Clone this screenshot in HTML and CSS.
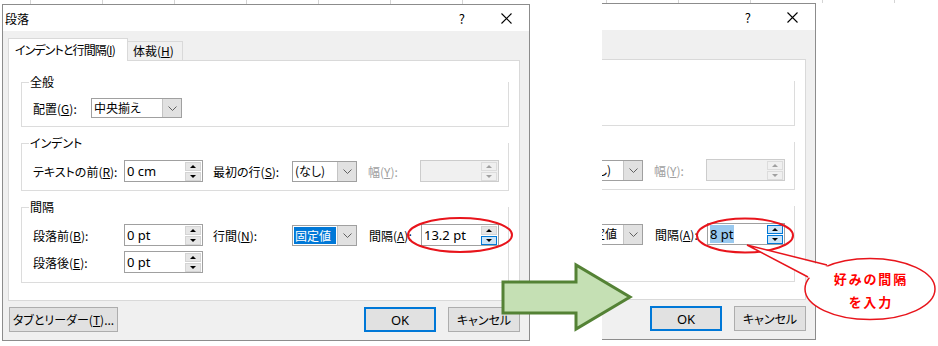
FILE: index.html
```html
<!DOCTYPE html>
<html lang="ja">
<head>
  <meta charset="UTF-8">
  <meta name="viewport" content="width=device-width, initial-scale=1.0">
  <title>段落</title>
  <link rel="stylesheet" href="styles.css">
</head>
<body>
  <div class="page">

    <!-- before: line spacing 13.2 pt -->
    <div class="shot shot-left">
      <div class="sheet-top"></div>
      <div class="dialog">
        <div class="titlebar">
          <span class="title">段落</span>
          <span class="help">?</span>
          <svg class="close" width="11" height="11" viewBox="0 0 11 11"><path d="M0.5 0.5L10.5 10.5M10.5 0.5L0.5 10.5" stroke="#000" stroke-width="1.1"/></svg>
        </div>
        <div class="dlg-body">
          <div class="tabs">
            <div class="tab active">インデントと行間隔(<u>I</u>)</div>
            <div class="tab">体裁(<u>H</u>)</div>
            <div class="tab-rest"></div>
          </div>
          <div class="panel">
            <div class="group">
              <div class="group-head"><span class="stub"></span><span class="legend">全般</span><span class="fill"></span></div>
              <div class="group-body g-general">
                <div class="row">
                  <span class="lbl w58">配置(<u>G</u>):</span>
                  <div class="combo wide"><span class="val">中央揃え</span><span class="drop"><svg width="9" height="5" viewBox="0 0 9 5"><path d="M0.5 0.5L4.5 4.5L8.5 0.5" fill="none" stroke="#606060"/></svg></span></div>
                </div>
              </div>
            </div>

            <div class="group">
              <div class="group-head"><span class="stub"></span><span class="legend">インデント</span><span class="fill"></span></div>
              <div class="group-body g-indent">
                <div class="row">
                  <span class="lbl w91">テキストの前(<u>R</u>):</span>
                  <div class="spin"><span class="val">0 cm</span><span class="arrows"><i class="arr up"></i><i class="arr down"></i></span></div>
                  <span class="lbl w79 gap10">最初の行(<u>S</u>):</span>
                  <div class="combo"><span class="val">(なし)</span><span class="drop"><svg width="9" height="5" viewBox="0 0 9 5"><path d="M0.5 0.5L4.5 4.5L8.5 0.5" fill="none" stroke="#606060"/></svg></span></div>
                  <span class="lbl w52 gap11 dim">幅(<u>Y</u>):</span>
                  <div class="spin off"><span class="val"></span><span class="arrows"><i class="arr up"></i><i class="arr down"></i></span></div>
                </div>
              </div>
            </div>

            <div class="group">
              <div class="group-head"><span class="stub"></span><span class="legend">間隔</span><span class="fill"></span></div>
              <div class="group-body g-spacing">
                <div class="row">
                  <span class="lbl w91">段落前(<u>B</u>):</span>
                  <div class="spin"><span class="val">0 pt</span><span class="arrows"><i class="arr up"></i><i class="arr down"></i></span></div>
                  <span class="lbl w79 gap10">行間(<u>N</u>):</span>
                  <div class="combo"><span class="val sel">固定値</span><span class="drop"><svg width="9" height="5" viewBox="0 0 9 5"><path d="M0.5 0.5L4.5 4.5L8.5 0.5" fill="none" stroke="#606060"/></svg></span></div>
                  <span class="lbl w52 gap12">間隔(<u>A</u>):</span>
                  <div class="spin narrow"><span class="val">13.2 pt</span><span class="arrows"><i class="arr up"></i><i class="arr down hot"></i></span></div>
                </div>
                <div class="row">
                  <span class="lbl w91">段落後(<u>E</u>):</span>
                  <div class="spin"><span class="val">0 pt</span><span class="arrows"><i class="arr up"></i><i class="arr down"></i></span></div>
                </div>
              </div>
            </div>
          </div>

          <div class="btn-row">
            <div class="btn btn-tabs">タブとリーダー(<u>T</u>)...</div>
            <div class="btn btn-ok">OK</div>
            <div class="btn btn-cancel">キャンセル</div>
          </div>
        </div>
      </div>
    </div>

    <!-- after: line spacing 8 pt (cropped) -->
    <div class="shot shot-right">
      <div class="sheet-top"></div>
      <div class="dialog">
        <div class="titlebar">
          <span class="title">段落</span>
          <span class="help">?</span>
          <svg class="close" width="11" height="11" viewBox="0 0 11 11"><path d="M0.5 0.5L10.5 10.5M10.5 0.5L0.5 10.5" stroke="#000" stroke-width="1.1"/></svg>
        </div>
        <div class="dlg-body">
          <div class="tabs">
            <div class="tab active">インデントと行間隔(<u>I</u>)</div>
            <div class="tab">体裁(<u>H</u>)</div>
            <div class="tab-rest"></div>
          </div>
          <div class="panel">
            <div class="group">
              <div class="group-head"><span class="stub"></span><span class="legend">全般</span><span class="fill"></span></div>
              <div class="group-body g-general">
                <div class="row">
                  <span class="lbl w58">配置(<u>G</u>):</span>
                  <div class="combo wide"><span class="val">中央揃え</span><span class="drop"><svg width="9" height="5" viewBox="0 0 9 5"><path d="M0.5 0.5L4.5 4.5L8.5 0.5" fill="none" stroke="#606060"/></svg></span></div>
                </div>
              </div>
            </div>

            <div class="group">
              <div class="group-head"><span class="stub"></span><span class="legend">インデント</span><span class="fill"></span></div>
              <div class="group-body g-indent">
                <div class="row">
                  <span class="lbl w91">テキストの前(<u>R</u>):</span>
                  <div class="spin"><span class="val">0 cm</span><span class="arrows"><i class="arr up"></i><i class="arr down"></i></span></div>
                  <span class="lbl w79 gap10">最初の行(<u>S</u>):</span>
                  <div class="combo"><span class="val">(なし)</span><span class="drop"><svg width="9" height="5" viewBox="0 0 9 5"><path d="M0.5 0.5L4.5 4.5L8.5 0.5" fill="none" stroke="#606060"/></svg></span></div>
                  <span class="lbl w52 gap11 dim">幅(<u>Y</u>):</span>
                  <div class="spin off"><span class="val"></span><span class="arrows"><i class="arr up"></i><i class="arr down"></i></span></div>
                </div>
              </div>
            </div>

            <div class="group">
              <div class="group-head"><span class="stub"></span><span class="legend">間隔</span><span class="fill"></span></div>
              <div class="group-body g-spacing">
                <div class="row">
                  <span class="lbl w91">段落前(<u>B</u>):</span>
                  <div class="spin"><span class="val">0 pt</span><span class="arrows"><i class="arr up"></i><i class="arr down"></i></span></div>
                  <span class="lbl w79 gap10">行間(<u>N</u>):</span>
                  <div class="combo"><span class="val">固定値</span><span class="drop"><svg width="9" height="5" viewBox="0 0 9 5"><path d="M0.5 0.5L4.5 4.5L8.5 0.5" fill="none" stroke="#606060"/></svg></span></div>
                  <span class="lbl w52 gap12">間隔(<u>A</u>):</span>
                  <div class="spin narrow"><span class="val"><span class="pick">8 pt</span></span><span class="arrows"><i class="arr up hot"></i><i class="arr down hot"></i></span></div>
                </div>
                <div class="row">
                  <span class="lbl w91">段落後(<u>E</u>):</span>
                  <div class="spin"><span class="val">0 pt</span><span class="arrows"><i class="arr up"></i><i class="arr down"></i></span></div>
                </div>
              </div>
            </div>
          </div>

          <div class="btn-row">
            <div class="btn btn-tabs">タブとリーダー(<u>T</u>)...</div>
            <div class="btn btn-ok">OK</div>
            <div class="btn btn-cancel">キャンセル</div>
          </div>
        </div>
      </div>
    </div>

    <!-- annotations drawn over both shots -->
    <svg class="marks" width="938" height="346" viewBox="0 0 938 346">
      <polygon points="503,282 576,282 576,265 630,297 576,329 576,313 503,313" fill="#c5e0b4" stroke="#548235" stroke-width="3"/>
      <ellipse cx="460" cy="235" rx="52" ry="17" fill="none" stroke="#e8141b" stroke-width="2"/>
      <ellipse cx="745" cy="235.5" rx="48" ry="17" fill="none" stroke="#e8141b" stroke-width="2"/>
      <ellipse cx="870" cy="289" rx="65" ry="30.5" fill="#fff" stroke="#e8141b" stroke-width="1.5"/>
      <polygon points="747,245 829,267 836,279 810,278" fill="#fff"/>
      <polyline points="827,265 747,245 808,277" fill="none" stroke="#e8141b" stroke-width="1.5"/>
    </svg>
    <div class="callout-text">好みの間隔<br>を入力</div>
  </div>
</body>
</html>
```

FILE: styles.css
```css
* {
  box-sizing: border-box;
}
body {
  margin: 0;
  background: #fff;
  font-family: "Noto Sans CJK JP", "Noto Sans", sans-serif;
  font-size: 12px;
  color: #000;
  font-feature-settings: "palt";
}
.page {
  position: relative;
  display: flex;
  width: 938px;
  height: 346px;
  overflow: hidden;
}
.shot {
  flex: none;
}
.shot-left {
  width: 530px;
}
.shot-right {
  width: 336px;
  margin-left: 72px;
  overflow: hidden;
}

/* spreadsheet grid peeking above the dialog */
.sheet-top {
  height: 4px;
  background-image: linear-gradient(to right, #d4d4d4 0 1px, transparent 1px);
  background-size: 72px 100%;
  background-position: 30px 0;
  background-repeat: repeat-x;
}
.shot-right .sheet-top {
  height: 3px;
  background-position: 4px 0;
}

.dialog {
  width: 528px;
  margin-left: 2px;
  border: 1px solid #8c8c8c;
  background: #f0f0f0;
}
.shot-right .dialog {
  margin-left: -314px;
}
.titlebar {
  height: 26px;
  background: #fff;
  display: flex;
  align-items: center;
  padding-left: 2px;
}
.title {
  flex: 1;
}
.help {
  margin-right: 36px;
  font-size: 13px;
}
.close {
  margin-right: 17px;
}
.dlg-body {
  padding: 7px 9px 8px 5px;
}

/* tabs */
.tabs {
  display: flex;
  align-items: flex-end;
  height: 23px;
}
.tab {
  height: 20px;
  width: 55px;
  padding-left: 5px;
  border: 1px solid #d9d9d9;
  border-left: none;
  line-height: 18px;
  background: #f0f0f0;
  white-space: nowrap;
}
.tab.active {
  height: 23px;
  width: 120px;
  padding-left: 6px;
  border-left: 1px solid #d9d9d9;
  border-bottom: none;
  background: #fff;
  line-height: 22px;
  letter-spacing: -0.9px;
}
.tab-rest {
  flex: 1;
  border-bottom: 1px solid #d9d9d9;
}
.panel {
  height: 240px;
  background: #fff;
  border: 1px solid #d9d9d9;
  border-top: none;
  padding: 14px 10px 0 12px;
}

/* group boxes */
.group + .group {
  margin-top: 9px;
}
.group-head {
  display: flex;
  height: 14px;
}
.stub {
  width: 8px;
  height: 7px;
  align-self: flex-end;
  border-top: 1px solid #dcdcdc;
  border-left: 1px solid #dcdcdc;
}
.legend {
  line-height: 14px;
  padding: 0 1px;
}
.fill {
  flex: 1;
  height: 7px;
  align-self: flex-end;
  border-right: 1px solid #dcdcdc;
}
.group-body {
  border: 1px solid #dcdcdc;
  border-top: none;
  padding: 10px 0 8px 11px;
}
.g-general {
  padding-top: 9px;
}
.g-spacing {
  padding-bottom: 9px;
}
.row {
  display: flex;
  align-items: center;
}
.row + .row {
  margin-top: 5px;
}
.lbl {
  flex: none;
  white-space: nowrap;
}
.w58 { width: 58px; }
.w91 { width: 91px; }
.w79 { width: 79px; }
.w52 { width: 52px; }
.gap10 { margin-left: 10px; }
.gap11 { margin-left: 11px; }
.gap12 { margin-left: 12px; }
.dim {
  color: #a0a0a0;
}

/* spin boxes */
.spin {
  width: 79px;
  height: 22px;
  border: 1px solid #a0a0a0;
  background: #fff;
  display: flex;
  align-items: center;
}
.spin.narrow {
  width: 78px;
}
.spin .val {
  flex: 1;
  padding-left: 2px;
  font-family: "Noto Sans", "Noto Sans CJK JP", sans-serif;
  font-size: 13px;
  line-height: 18px;
}
.pick {
  background: #99c9ef;
}
.arrows {
  width: 16px;
  margin-right: 1px;
  display: flex;
  flex-direction: column;
  gap: 1px;
}
.arr {
  height: 9px;
  background: #e6e6e6;
  border: 1px solid #d4d4d4;
  display: flex;
  align-items: center;
  justify-content: center;
}
.arr::before {
  content: "";
  border-left: 3px solid transparent;
  border-right: 3px solid transparent;
}
.arr.up::before {
  border-bottom: 3px solid #000;
}
.arr.down::before {
  border-top: 3px solid #000;
}
.arr.hot {
  background: #cce4f7;
  border-color: #0078d7;
}
.spin.off {
  background: #f0f0f0;
  border-color: #cccccc;
}
.spin.off .arr {
  background: #f0f0f0;
  border-color: #dcdcdc;
}
.spin.off .arr.up::before {
  border-bottom-color: #a0a0a0;
}
.spin.off .arr.down::before {
  border-top-color: #a0a0a0;
}

/* combo boxes */
.combo {
  width: 65px;
  height: 21px;
  border: 1px solid #a0a0a0;
  background: #fff;
  display: flex;
}
.combo.wide {
  width: 91px;
  height: 20px;
}
.combo .val {
  flex: 1;
  padding-left: 2px;
  line-height: 18px;
  white-space: nowrap;
}
.combo .val.sel {
  margin: 1px;
  padding-left: 1px;
  background: #0078d7;
  color: #fff;
  line-height: 17px;
}
.drop {
  width: 19px;
  background: #e1e1e1;
  border-left: 1px solid #c4c4c4;
  display: flex;
  align-items: center;
  justify-content: center;
}

/* dialog buttons */
.btn-row {
  display: flex;
  margin-top: 6px;
  height: 25px;
}
.btn {
  height: 25px;
  border: 1px solid #adadad;
  background: #e1e1e1;
  display: flex;
  align-items: center;
  justify-content: center;
  white-space: nowrap;
}
.btn-tabs {
  width: 109px;
  margin-left: 1px;
}
.btn-ok {
  width: 72px;
  margin-left: auto;
  border: 2px solid #0078d7;
  font-family: "Noto Sans", sans-serif;
  font-size: 13px;
}
.btn-cancel {
  width: 72px;
  margin-left: 12px;
}

/* annotations */
.marks {
  position: absolute;
  left: 0;
  top: 0;
  pointer-events: none;
}
.callout-text {
  position: absolute;
  left: 806px;
  top: 267px;
  width: 130px;
  text-align: center;
  color: #ff0000;
  font-weight: bold;
  font-size: 13px;
  line-height: 23px;
  letter-spacing: 2px;
}
```
